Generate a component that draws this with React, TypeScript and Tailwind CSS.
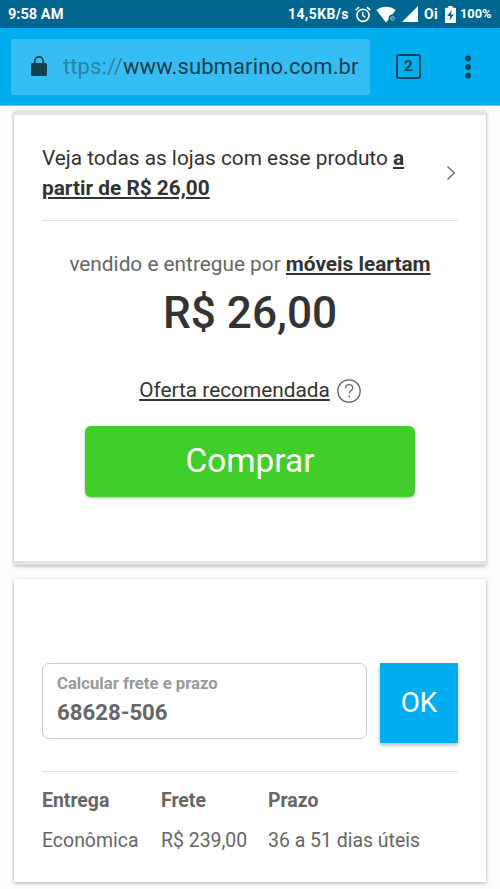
import type { ReactNode } from "react";

type Delivery = {
  name: string;
  price: string;
  term: string;
};

const deliveries: Delivery[] = [
  { name: "Econômica", price: "R$ 239,00", term: "36 a 51 dias úteis" },
];

const AlarmIcon = () => (
  <svg width="16" height="17" viewBox="0 0 16 17" fill="none" stroke="white">
    <circle cx="8" cy="9.3" r="6.1" strokeWidth="1.6" />
    <path d="M7.8 5.8v3.8l2.6 1.8" strokeWidth="1.3" />
    <path d="M.7 4.1 4.1 1.2M15.3 4.1 11.9 1.2" strokeWidth="1.6" />
  </svg>
);

const WifiIcon = () => (
  <svg width="21" height="17" viewBox="0 0 21 17" fill="white">
    <path d="M.3 4.1C5.8-.4 14.2-.4 19.7 4.1L16.3 8.6c-2.1-.2-3.6 1.2-3.6 3.2v1.4L10 16.4z" />
    <path
      d="M14.4 12.2h4.2c0-2.4-4-2.4-4 .2 0 2.3 2.8 2.6 3.8 1.2"
      fill="none"
      stroke="#8fc3d8"
      strokeWidth="1"
    />
  </svg>
);

const SignalIcon = () => (
  <svg width="16" height="16" viewBox="0 0 16 16" fill="white">
    <path d="M16 0v16H0z" />
  </svg>
);

const BatteryIcon = () => (
  <svg width="11" height="17" viewBox="0 0 11 17">
    <path
      d="M3.4 0h4.2v1.7H10c.6 0 1 .4 1 1V16c0 .6-.4 1-1 1H1c-.6 0-1-.4-1-1V2.7c0-.6.4-1 1-1h2.4z"
      fill="white"
    />
    <path d="M6.7 4 2.2 10h2.9l-.7 4.6L8.9 8.6H6z" fill="#00658f" />
  </svg>
);

const LockIcon = () => (
  <svg width="16" height="21" viewBox="0 0 16 21">
    <rect x="0" y="7" width="16" height="13" rx="1.6" fill="#14404f" />
    <path
      d="M3.8 8V5a4.2 4.2 0 0 1 8.4 0v3"
      fill="none"
      stroke="#14404f"
      strokeWidth="1.7"
    />
  </svg>
);

const MenuIcon = () => (
  <svg width="6" height="24" viewBox="0 0 6 24" fill="#0a435b">
    <circle cx="3" cy="3.5" r="2.9" />
    <circle cx="3" cy="12" r="2.9" />
    <circle cx="3" cy="20.5" r="2.9" />
  </svg>
);

const HelpIcon = () => (
  <svg width="24" height="24" viewBox="0 0 24 24" fill="none" stroke="#666">
    <circle cx="12" cy="12" r="11.2" strokeWidth="1.3" />
    <path
      d="M8.5 9.3c0-2.1 1.5-3.6 3.6-3.6s3.6 1.3 3.6 3.3c0 2.7-3.5 2.9-3.5 5.6"
      strokeWidth="1.3"
    />
    <path d="M12.2 16.6v1.7" strokeWidth="1.5" />
  </svg>
);

const StatusBar = () => (
  <div className="flex h-7 items-center bg-[#00658f] pl-2 text-[14px] font-bold text-white">
    <span className="w-[280px] whitespace-nowrap pt-px text-[14.6px]">9:58 AM</span>
    <span className="w-[67px] whitespace-nowrap pt-px tracking-[0.4px]">14,5KB/s</span>
    <AlarmIcon />
    <span className="ml-[5px]">
      <WifiIcon />
    </span>
    <span className="ml-[5px]">
      <SignalIcon />
    </span>
    <span className="ml-[6px] w-[21px] pt-px tracking-[0.3px]">Oi</span>
    <BatteryIcon />
    <span className="ml-1 text-[12.8px]">100%</span>
  </div>
);

const Toolbar = () => (
  <div className="flex h-[78px] items-center border-b border-[#79c8e8] bg-[#00aef0] pl-[11px]">
    <div className="flex h-14 w-[359px] items-center rounded-[3px] bg-[#36bdf3] pl-5">
      <LockIcon />
      <div className="ml-4 whitespace-nowrap text-[22px] leading-[30px] tracking-[0.11px] text-[#183e4c]">
        <span className="text-[#2883a8]">ttps://</span>www.submarino.com.br
      </div>
    </div>
    <div className="ml-[26px] flex size-[25px] items-center justify-center rounded-[3px] border-2 border-[#0a435b] pt-px text-[15.5px] font-bold text-[#0a435b]">
      2
    </div>
    <div className="ml-[44px]">
      <MenuIcon />
    </div>
  </div>
);

const Card = ({ children, className }: { children: ReactNode; className: string }) => (
  <section
    className={`mx-[14px] bg-white px-7 shadow-[0_1px_4px_rgba(0,0,0,0.32)] ${className}`}
  >
    {children}
  </section>
);

const Offer = () => (
  <Card className="mt-[5px] h-[454px] border-y-[4px] border-[#e2e2e1]">
    <a className="flex h-[106px] items-center justify-between border-b border-[#e2e2e2] pt-[11px] text-[#333]">
      <p className="whitespace-nowrap text-[20.8px] leading-[30.5px]">
        Veja todas as lojas com esse produto <b className="underline">a</b>
        <br />
        <b className="underline">partir de R$ 26,00</b>
      </p>
      <svg width="12" height="16" viewBox="0 0 12 16" fill="none" stroke="#666">
        <path d="m1.5 1.5 6.8 6.5-6.8 6.5" strokeWidth="1.3" />
      </svg>
    </a>
    <div className="mt-[28px] whitespace-nowrap text-center text-[20.8px] leading-[30px] text-[#666]">
      vendido e entregue por <b className="text-[#333] underline">móveis leartam</b>
    </div>
    <div className="mt-[4px] text-center text-[44.2px] font-medium leading-[60px] text-[#333]">
      R$ 26,00
    </div>
    <div className="mt-[32px] flex items-center justify-center gap-[7px] text-[20.8px] leading-[30px] text-[#333]">
      <span className="underline">Oferta recomendada</span>
      <span className="pt-px">
        <HelpIcon />
      </span>
    </div>
    <button className="mx-auto mt-[21px] block h-[71px] w-[330px] rounded-[6px] bg-[#41ce2a] text-[33.4px] text-white shadow-[0_1px_3px_rgba(0,0,0,0.3)]">
      Comprar
    </button>
  </Card>
);

const Shipping = () => (
  <Card className="mt-[14px] h-[303px] pt-[84px]">
    <div className="flex h-[109px] justify-between border-b border-[#e2e2e2]">
      <label className="block h-[76px] w-[325px] rounded-[7px] border border-[#ccc] pl-[14px] pt-[7px] font-bold">
        <span className="block text-[16.7px] leading-[26px] text-[#999]">
          Calcular frete e prazo
        </span>
        <span className="block text-[22.2px] leading-[31px] text-[#666]">68628-506</span>
      </label>
      <button className="h-[80px] w-[78px] bg-[#00aeef] text-[27.8px] text-white shadow-[0_2px_4px_rgba(0,0,0,0.3)]">
        OK
      </button>
    </div>
    <table className="mt-[9px] w-full table-fixed whitespace-nowrap text-left text-[19.45px] leading-[40px] text-[#666]">
      <colgroup>
        <col className="w-[119px]" />
        <col className="w-[107px]" />
        <col />
      </colgroup>
      <thead>
        <tr>
          <th>Entrega</th>
          <th>Frete</th>
          <th>Prazo</th>
        </tr>
      </thead>
      <tbody>
        {deliveries.map((d) => (
          <tr key={d.name}>
            <td>{d.name}</td>
            <td>{d.price}</td>
            <td>{d.term}</td>
          </tr>
        ))}
      </tbody>
    </table>
  </Card>
);

export default function App() {
  return (
    <main className="h-[889px] w-[500px] overflow-hidden bg-[#fdfdfd] font-[Roboto,sans-serif]">
      <StatusBar />
      <Toolbar />
      <Offer />
      <Shipping />
    </main>
  );
}
